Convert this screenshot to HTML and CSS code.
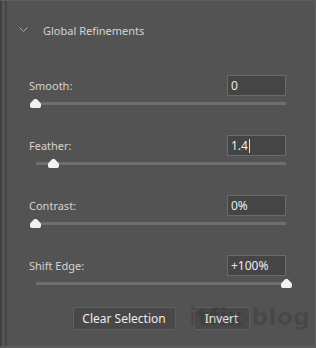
FILE: index.html
```html
<!DOCTYPE html>
<html lang="en">
<head>
  <meta charset="UTF-8" />
  <title>Global Refinements</title>
  <link rel="stylesheet" href="styles.css">
</head>
<body>
  <div class="panel">
    <div class="section-head">
      <svg class="chevron" width="9" height="6" viewBox="0 0 9 6"><path d="M0.5 0.5 L4.5 4.5 L8.5 0.5" fill="none" stroke="#a8a8a8" stroke-width="1"/></svg>
      <span>Global Refinements</span>
    </div>

    <div class="field">
      <div class="field-top">
        <label>Smooth:</label>
        <div class="num">0</div>
      </div>
      <div class="slider"><div class="thumb" style="left: 0px"></div></div>
    </div>

    <div class="field">
      <div class="field-top">
        <label>Feather:</label>
        <div class="num focus">1.4<span class="caret"></span></div>
      </div>
      <div class="slider"><div class="thumb" style="left: 18px"></div></div>
    </div>

    <div class="field">
      <div class="field-top">
        <label>Contrast:</label>
        <div class="num">0%</div>
      </div>
      <div class="slider"><div class="thumb" style="left: 0px"></div></div>
    </div>

    <div class="field">
      <div class="field-top">
        <label>Shift Edge:</label>
        <div class="num">+100%</div>
      </div>
      <div class="slider"><div class="thumb" style="left: 251px"></div></div>
    </div>

    <div class="actions">
      <button class="btn btn-wide">Clear Selection</button>
      <button class="btn">Invert</button>
    </div>

    <div class="watermark">itfix blog</div>
  </div>
</body>
</html>
```

FILE: styles.css
```css
body {
  margin: 0;
  background: #535353;
  font-family: 'Noto Sans', sans-serif;
  font-size: 11px;
  color: #d8d8d8;
}

.panel {
  position: relative;
  width: 316px;
  height: 348px;
  box-sizing: border-box;
  border-top: 1px solid #5c5c5c;
  border-right: 1px solid #5e5e5e;
  border-bottom: 2px solid #5c5c5c;
  box-shadow: inset 2px 0 #3f3f3f, inset 5px 0 #545454, inset 7px 0 #444444;
  padding: 0 0 0 29px;
  overflow: hidden;
}

.section-head {
  display: flex;
  align-items: center;
  height: 58px;
  margin-left: -10px;
}

.chevron {
  margin-right: 15px;
}

.section-head span {
  color: #d4d4d4;
}

.field {
  height: 60px;
  margin-top: 16px;
  margin-bottom: -16px;
}

.field-top {
  display: flex;
  align-items: center;
  justify-content: space-between;
  width: 256px;
  height: 21px;
}

.field-top label {
  color: #d4d4d4;
}

.num {
  height: 19px;
  width: 54px;
  border: 1px solid #6a6a6a;
  background: #454545;
  color: #ececec;
  font-size: 12px;
  line-height: 19px;
  padding-left: 3px;
  margin-right: -1px;
}

.num.focus {
  border-color: #3e6fd6;
}

.caret {
  display: inline-block;
  width: 1px;
  height: 14px;
  background: #dcdcdc;
  vertical-align: -3px;
  margin-left: 1px;
}

.slider {
  position: relative;
  margin-top: 6px;
  margin-left: 7px;
  width: 250px;
  height: 3px;
  background: #6e6e6e;
}

.thumb {
  position: absolute;
  top: -3px;
  width: 11px;
  height: 9px;
  margin-left: -6px;
  background: #f2f2f2;
  clip-path: polygon(0 100%, 0 50%, 40% 0, 60% 0, 100% 50%, 100% 100%);
  border-radius: 0 0 2px 2px;
}

.actions {
  display: flex;
  justify-content: center;
  gap: 18px;
  margin-top: 8px;
  margin-left: -22px;
}

.btn {
  height: 23px;
  width: 56px;
  padding: 0;
  background: #484848;
  border: 1px solid #5f5f5f;
  border-radius: 2px;
  color: #ececec;
  font-family: 'Noto Sans', sans-serif;
  font-size: 12px;
}

.btn-wide {
  width: 103px;
}

.watermark {
  position: absolute;
  left: 189px;
  top: 303px;
  font-family: 'DejaVu Sans', sans-serif;
  font-weight: bold;
  font-size: 23px;
  color: rgba(0, 0, 0, 0.15);
  letter-spacing: 0.5px;
  pointer-events: none;
}
```
